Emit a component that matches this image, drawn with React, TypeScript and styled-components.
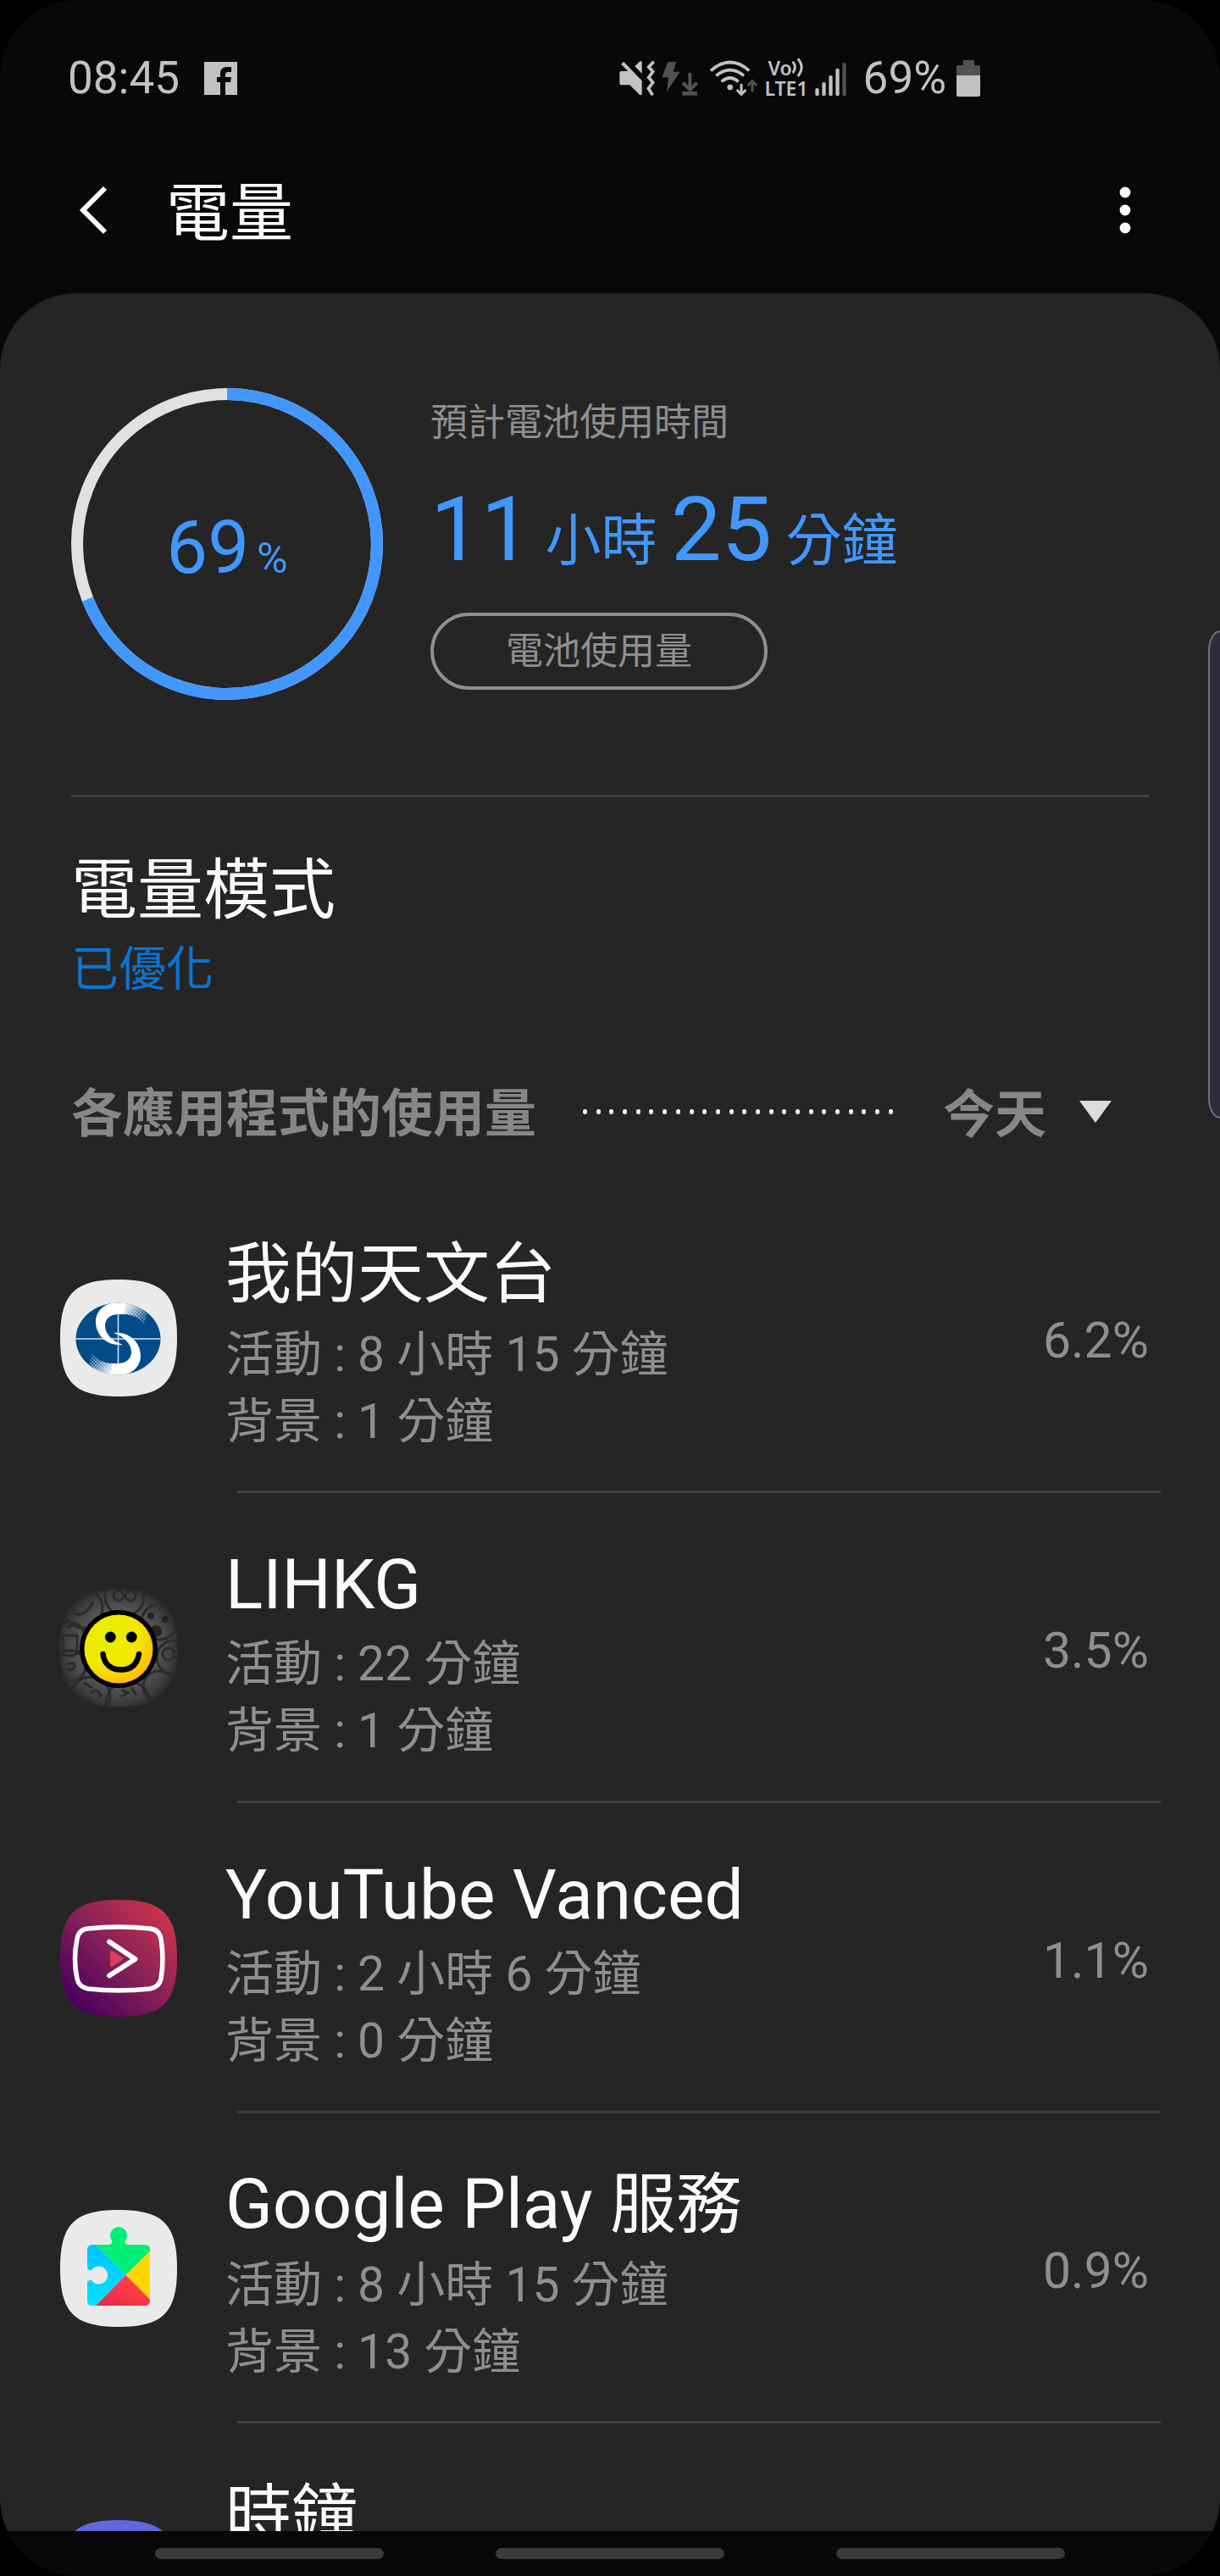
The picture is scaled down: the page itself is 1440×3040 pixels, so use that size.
import React from "react";
import styled, { createGlobalStyle } from "styled-components";

const color = {
  frame: "#000000",
  screen: "#080808",
  card: "#252525",
  line: "#3f3f3f",
  text: "#fafafa",
  muted: "#8f8f8f",
  section: "#878787",
  accent: "#4297ff",
  link: "#0b74d0",
  status: "#c2c2c2",
  dim: "#525252",
};

const GlobalStyle = createGlobalStyle`
  *, *::before, *::after { box-sizing: border-box; }
  body {
    margin: 0;
    background: ${color.frame};
    color: ${color.text};
    font-family: Roboto, "Noto Sans CJK TC", sans-serif;
    font-weight: 400;
  }
  h1, h2, p, ul { margin: 0; padding: 0; font-weight: 400; }
  button, select { font: inherit; color: inherit; background: none; border: 0; padding: 0; }
  svg { display: block; flex: none; }
`;

const Screen = styled.div`
  position: relative;
  display: flex;
  flex-direction: column;
  height: 100vh;
  overflow: hidden;
  border-radius: 92px;
  background: ${color.screen};
`;

/* ---------- status bar ---------- */

const StatusBar = styled.div`
  display: flex;
  flex: none;
  align-items: center;
  justify-content: space-between;
  padding: 60px 283px 26px 80px;
  color: ${color.status};
  font-size: 53px;
  line-height: 64px;
`;

const StatusGroup = styled.div<{ $gap: number }>`
  display: flex;
  align-items: center;
  gap: ${(p) => p.$gap}px;
`;

const Volte = styled.div`
  display: flex;
  flex-direction: column;
  font-family: "Noto Sans", Roboto, sans-serif;
  font-size: 23px;
  font-weight: 600;
  line-height: 24px;
`;

const VolteTop = styled.span`
  display: flex;
  align-items: center;
  padding-left: 4px;
`;

/* ---------- toolbar ---------- */

const Toolbar = styled.header`
  display: flex;
  flex: none;
  align-items: center;
  height: 196px;
  padding: 0 84px 0 82px;
`;

const IconButton = styled.button`
  display: flex;
  align-items: center;
  justify-content: center;
  width: 56px;
  height: 96px;
  cursor: pointer;
`;

const PageTitle = styled.h1`
  flex: 1;
  padding: 8px 0 0 58px;
  font-size: 75px;
  line-height: 96px;
`;

/* ---------- card ---------- */

const Card = styled.main`
  flex: 1;
  min-height: 0;
  overflow: hidden;
  border-radius: 90px 90px 0 0;
  background: ${color.card};
`;

const Hero = styled.section`
  display: flex;
  align-items: center;
  gap: 56px;
  margin: 0 84px;
  padding: 112px 0;
  border-bottom: 3px solid ${color.line};
`;

const Gauge = styled.div`
  position: relative;
  flex: none;
  width: 368px;
  height: 368px;
`;

const GaugeLabel = styled.div`
  position: absolute;
  inset: 0;
  display: flex;
  align-items: baseline;
  justify-content: center;
  gap: 9px;
  color: ${color.accent};
  font-size: 87px;
  line-height: 376px;
`;

const GaugeUnit = styled.span`
  font-size: 50px;
  line-height: 1;
`;

const Estimate = styled.div`
  display: flex;
  flex-direction: column;
  align-items: flex-start;
  gap: 36px;
`;

const EstimateLabel = styled.p`
  color: ${color.muted};
  font-size: 44px;
  line-height: 56px;
`;

const EstimateTime = styled.p`
  color: ${color.accent};
  font-size: 106px;
  line-height: 124px;
  white-space: nowrap;
`;

const TimeUnit = styled.span`
  font-size: 66px;
  line-height: 1;
`;

const UsageButton = styled.button`
  height: 91px;
  padding: 2px 85px 0;
  border: 4px solid ${color.muted};
  border-radius: 46px;
  color: ${color.muted};
  font-size: 44px;
  line-height: 56px;
  cursor: pointer;
`;

const ModeButton = styled.button`
  display: block;
  width: 100%;
  padding: 61px 84px 0;
  text-align: left;
  cursor: pointer;
`;

const ModeTitle = styled.span`
  display: block;
  font-size: 78px;
  line-height: 100px;
`;

const ModeValue = styled.span`
  display: block;
  color: ${color.link};
  font-size: 56px;
  line-height: 84px;
`;

const SectionBar = styled.div`
  display: flex;
  align-items: center;
  padding: 70px 128px 28px 84px;
  color: ${color.section};
  font-size: 61px;
  line-height: 112px;
`;

const SectionTitle = styled.h2`
  padding-top: 6px;
  font-size: 61px;
  font-weight: 700;
  line-height: 106px;
`;

const Dots = styled.div`
  display: flex;
  flex: 1;
  justify-content: space-between;
  margin: 0 59px 0 55px;
`;

const Dot = styled.i`
  width: 5px;
  height: 6px;
  border-radius: 50%;
  background: ${color.text};
`;

const Period = styled.label`
  display: flex;
  align-items: center;
  gap: 38px;
`;

const PeriodSelect = styled.select`
  appearance: none;
  height: 112px;
  padding-top: 4px;
  font-size: 61px;
  font-weight: 700;
  cursor: pointer;
`;

/* ---------- app list ---------- */

const AppList = styled.ul`
  list-style: none;
`;

const AppRow = styled.li`
  display: grid;
  grid-template-columns: 138px 1fr auto;
  column-gap: 57px;
  align-items: center;
  height: 363px;
  padding: 2px 84px 0 71px;
`;

const RowLine = styled.li`
  height: 3px;
  margin: 0 70px 0 280px;
  background: ${color.line};
`;

const AppText = styled.div`
  min-height: 278px;
  padding: 10px 0 2px;
`;

const AppName = styled.h2`
  font-size: 82px;
  line-height: 108px;
`;

const Han = styled.span`
  font-size: 78px;
`;

const AppDetail = styled.p`
  color: ${color.muted};
  font-size: 57px;
  line-height: 79px;
`;

const AppShare = styled.span`
  padding-top: 6px;
  color: ${color.muted};
  font-size: 59px;
  line-height: 79px;
`;

/* ---------- system overlays ---------- */

const EdgeHandle = styled.div`
  position: absolute;
  top: 744px;
  right: 0;
  width: 14px;
  height: 576px;
  border: 2px solid #716f7b;
  border-right: 0;
  border-radius: 14px 0 0 14px / 24px 0 0 24px;
  background: #2e2b3a;
`;

const NavBar = styled.nav`
  display: flex;
  flex: none;
  align-items: center;
  justify-content: center;
  gap: 132px;
  height: 53px;
`;

const NavButton = styled.button`
  width: 270px;
  height: 13px;
  border-radius: 7px;
  background: #3a3a3a;
`;

/* ---------- drawings ---------- */

const SQUIRCLE =
  "M69 0C121 0 138 17 138 69C138 121 121 138 69 138C17 138 0 121 0 69C0 17 17 0 69 0Z";

const FacebookIcon = () => (
  <svg width="39" height="39" viewBox="0 0 39 39" aria-hidden="true">
    <path d="M0 0H39V39H0Z" fill={color.status} />
    <path
      d="M19 39V24H15V18H19V14Q19 6 27 6H32V12H28Q25 12 25 15V18H32L31 24H25V39Z"
      fill={color.screen}
    />
  </svg>
);

const MuteIcon = () => (
  <svg width="42" height="43" viewBox="91 84 126 129" aria-hidden="true">
    <path
      d="M107 90L171 157V200Q171 208 164 208L128 172H98Q92 172 92 166V129Q92 123 98 123H122L97 98Z"
      fill={color.status}
    />
    <path d="M146 106L164 88Q171 85 171 92V131Z" fill={color.status} />
    <path
      d="M213 89L195 108L210 125L195 145L210 163L194 184L209 208"
      fill="none"
      stroke={color.status}
      strokeWidth="11"
    />
  </svg>
);

const ChargeDownloadIcon = () => (
  <svg width="43" height="43" viewBox="240 84 129 129" aria-hidden="true">
    <path d="M262 90H291L281 125H305L258 195L264 145H241Z" fill={color.dim} />
    <path
      d="M340 129V186M315 164L340 189L365 164"
      fill="none"
      stroke={color.dim}
      strokeWidth="12"
    />
    <path d="M313 195H366V209H313Z" fill={color.dim} />
  </svg>
);

const WifiIcon = () => (
  <svg width="56" height="43" viewBox="416 84 168 129" aria-hidden="true">
    <g fill="none" stroke={color.status} strokeWidth="11">
      <path d="M419 121Q487 62 555 121" />
      <path d="M438 139Q487 99 536 139" />
      <path d="M457 160Q487 134 517 160" />
    </g>
    <circle cx="487" cy="180" r="10" fill={color.status} />
    <path
      d="M527 168V203M511 189L527 205L543 189"
      fill="none"
      stroke={color.status}
      strokeWidth="9"
    />
    <path
      d="M566 196V160M550 174L566 158L581 174"
      fill="none"
      stroke={color.dim}
      strokeWidth="9"
    />
  </svg>
);

const WavesIcon = () => (
  <svg width="13" height="24" viewBox="706 84 39 72" aria-hidden="true">
    <path
      d="M708 98Q724 118 708 138M726 88Q752 118 726 150"
      fill="none"
      stroke={color.status}
      strokeWidth="9"
    />
  </svg>
);

const SignalIcon = () => (
  <svg width="37" height="43" viewBox="791 84 111 129" aria-hidden="true">
    {[183, 162, 138, 113, 93].map((top, i) => (
      <rect
        key={top}
        x={792 + i * 24}
        y={top}
        width="13"
        height={211 - top}
        rx="6"
        fill={i === 4 ? color.dim : color.status}
      />
    ))}
  </svg>
);

const BatteryIcon = () => (
  <svg width="28" height="43" viewBox="0 0 84 129" aria-hidden="true">
    <path d="M23 4Q23 0 27 0H59Q63 0 63 4V18H78Q84 18 84 24V54H0V24Q0 18 6 18H23Z" fill={color.dim} />
    <path d="M0 54H84V123Q84 129 78 129H6Q0 129 0 123Z" fill={color.status} />
  </svg>
);

const BackIcon = () => (
  <svg width="36" height="58" viewBox="0 0 36 58" aria-hidden="true">
    <path d="M32 3L6 29L32 55" fill="none" stroke={color.text} strokeWidth="6" />
  </svg>
);

const MoreIcon = () => (
  <svg width="14" height="58" viewBox="0 0 14 58" aria-hidden="true">
    <g fill={color.text}>
      <circle cx="7" cy="8" r="6.4" />
      <circle cx="7" cy="29" r="6.4" />
      <circle cx="7" cy="50" r="6.4" />
    </g>
  </svg>
);

const CaretIcon = () => (
  <svg width="38" height="26" viewBox="0 0 38 26" aria-hidden="true">
    <path d="M0 0H38L19 26Z" fill="#dcdcdc" />
  </svg>
);

const GaugeRing = ({ percent }: { percent: number }) => (
  <svg width="368" height="368" viewBox="0 0 368 368" aria-hidden="true">
    <g fill="none" strokeWidth="14" transform="rotate(-90 184 184)">
      <circle cx="184" cy="184" r="177" stroke="#e1e1e1" />
      <circle
        cx="184"
        cy="184"
        r="177"
        stroke={color.accent}
        pathLength={100}
        strokeDasharray={`${percent} 100`}
      />
    </g>
  </svg>
);

const AppIconFrame = ({ children }: { children: React.ReactNode }) => (
  <svg width="138" height="138" viewBox="0 0 138 138" aria-hidden="true">
    {children}
  </svg>
);

const Swoosh = () => (
  <>
    <path
      d="M76 26C57 25 43 34 42 48C41 64 54 79 74 77C62 73 53 64 53 55C53 47 58 41 70 41L76 41Z"
      fill="#ffffff"
    />
    <path d="M75 26L90 26L103 40L99 52C94 46 86 41 75 41Z" fill="url(#swooshFade)" />
    <path d="M75 26L90 26L103 40L99 52C94 46 86 41 75 41Z" fill="url(#halftone)" opacity="0.6" />
  </>
);

const ObservatoryIcon = () => (
  <AppIconFrame>
    <defs>
      <pattern id="halftone" width="4" height="4" patternUnits="userSpaceOnUse">
        <circle cx="1" cy="1" r="0.9" fill="#ffffff" />
        <circle cx="3" cy="3" r="0.9" fill="#ffffff" />
      </pattern>
      <linearGradient id="swooshFade" gradientUnits="userSpaceOnUse" x1="75" y1="30" x2="98" y2="46">
        <stop offset="0" stopColor="#ffffff" />
        <stop offset="1" stopColor="#ffffff" stopOpacity="0" />
      </linearGradient>
      <clipPath id="globe">
        <ellipse cx="68.5" cy="70" rx="50" ry="42.5" />
      </clipPath>
    </defs>
    <path d={SQUIRCLE} fill="#eaeaea" />
    <g clipPath="url(#globe)">
      <path d="M0 0H138V138H0Z" fill="#004b88" />
      <path d="M68.5 40V100M18 70H119" stroke="#cfe0ee" strokeWidth="1.6" />
      <Swoosh />
      <g transform="rotate(180 68.5 70)">
        <Swoosh />
      </g>
    </g>
  </AppIconFrame>
);

const LihkgIcon = () => (
  <AppIconFrame>
    <defs>
      <radialGradient id="lihkgBack" cx="50%" cy="50%" r="58%">
        <stop offset="0.55" stopColor="#565656" />
        <stop offset="0.8" stopColor="#3e3e3e" />
        <stop offset="1" stopColor="#1d1d1d" />
      </radialGradient>
      <radialGradient id="lihkgFace" cx="35%" cy="30%" r="80%">
        <stop offset="0" stopColor="#e6f000" />
        <stop offset="0.55" stopColor="#f2e800" />
        <stop offset="1" stopColor="#ffb400" />
      </radialGradient>
      <clipPath id="lihkgClip">
        <path d={SQUIRCLE} />
      </clipPath>
    </defs>
    <g clipPath="url(#lihkgClip)">
      <path d="M0 0H138V138H0Z" fill="url(#lihkgBack)" />
      <g fill="none" stroke="#2b2b2b" strokeWidth="3">
        <circle cx="27" cy="22" r="23" />
        <path d="M14 26Q28 36 39 14" />
        <circle cx="76" cy="8" r="23" />
        <circle cx="69" cy="7" r="6" />
        <circle cx="83" cy="7" r="6" />
        <circle cx="117" cy="38" r="21" />
        <circle cx="10" cy="58" r="20" />
        <path d="M3 54H20V72H4ZM9 45Q16 38 22 46" />
        <circle cx="12" cy="90" r="18" />
        <path d="M9 88Q18 84 17 91Q14 96 9 94" />
        <circle cx="134" cy="80" r="20" />
        <circle cx="128" cy="76" r="7" />
        <circle cx="36" cy="126" r="23" />
        <path d="M28 110L38 116M36 122Q46 114 48 128" />
        <circle cx="80" cy="134" r="26" />
        <path d="M72 118L80 122L72 126M84 116L90 124" />
        <circle cx="116" cy="114" r="18" />
      </g>
      <g fill="#242424">
        <circle cx="107" cy="31" r="4" />
        <circle cx="124" cy="35" r="4" />
        <circle cx="113" cy="49" r="7" />
      </g>
    </g>
    <circle cx="69" cy="70" r="46" fill="#000000" />
    <circle cx="69" cy="70" r="40.5" fill="url(#lihkgFace)" />
    <circle cx="59.3" cy="56" r="6.4" fill="#000000" />
    <circle cx="84.3" cy="56" r="6.4" fill="#000000" />
    <path
      d="M50.5 76C52 88 60 94.500 72 94.5C84 94.5 91 88 93 76"
      fill="none"
      stroke="#000000"
      strokeWidth="6.5"
      strokeLinecap="round"
    />
  </AppIconFrame>
);

const VancedIcon = () => (
  <AppIconFrame>
    <defs>
      <linearGradient id="vancedBack" x1="0.12" y1="0.88" x2="0.88" y2="0.12">
        <stop offset="0" stopColor="#4a005e" />
        <stop offset="0.5" stopColor="#852058" />
        <stop offset="1" stopColor="#c8324a" />
      </linearGradient>
    </defs>
    <path d={SQUIRCLE} fill="url(#vancedBack)" />
    <path
      d="M33 34Q69 30 106 34Q117 35 119 46Q123 70 119 93Q117 103 106 105Q69 109 33 105Q22 103 20 93Q15 70 20 46Q22 35 33 34Z"
      fill="none"
      stroke="#ffffff"
      strokeWidth="5.5"
    />
    <path
      d="M60.5 61.5L73 69.5L60.5 77.5Z"
      fill="#d93f5e"
      stroke="#d93f5e"
      strokeWidth="3"
      strokeLinejoin="round"
    />
    <path
      d="M58 49.5L88.5 70L58 89.5"
      fill="none"
      stroke="#ffffff"
      strokeWidth="5.8"
      strokeLinecap="round"
      strokeLinejoin="round"
    />
  </AppIconFrame>
);

const PlayServicesIcon = () => (
  <AppIconFrame>
    <defs>
      <linearGradient id="playBlue" x1="0" y1="0" x2="0" y2="1">
        <stop offset="0" stopColor="#00c3ff" />
        <stop offset="1" stopColor="#00e2ff" />
      </linearGradient>
      <linearGradient id="playRed" x1="0" y1="1" x2="1" y2="0">
        <stop offset="0" stopColor="#dc2a50" />
        <stop offset="0.6" stopColor="#ff3a44" />
      </linearGradient>
      <clipPath id="puzzle">
        <path d="M38 41H58Q62 40 61 36A10 10 0 1 1 77 36Q75 40 79 41H100Q106 41 106 47V107Q106 113 100 113H38Q32 113 32 107V86Q33 82 37 83A10.5 10.5 0 1 0 37 71Q33 72 32 68V47Q32 41 38 41Z" />
      </clipPath>
    </defs>
    <path d={SQUIRCLE} fill="#eaeaea" />
    <g clipPath="url(#puzzle)">
      <path d="M30 41H42L77.5 77L42 113H30Z" fill="url(#playBlue)" />
      <path d="M42 41V16H108V46.5L77.5 77Z" fill="#00f076" />
      <path d="M108 46.5V107.5L77.5 77Z" fill="#ffd500" />
      <path d="M42 113L77.5 77L108 107.5V115H42Z" fill="url(#playRed)" />
    </g>
  </AppIconFrame>
);

const ClockIcon = () => (
  <AppIconFrame>
    <path d={SQUIRCLE} fill="#6367da" />
  </AppIconFrame>
);

/* ---------- data ---------- */

interface AppUsage {
  latin?: string;
  han?: string;
  active: string;
  background: string;
  share: string;
  Icon: () => React.ReactElement;
}

const apps: AppUsage[] = [
  { han: "我的天文台", active: "8 小時 15 分鐘", background: "1 分鐘", share: "6.2%", Icon: ObservatoryIcon },
  { latin: "LIHKG", active: "22 分鐘", background: "1 分鐘", share: "3.5%", Icon: LihkgIcon },
  { latin: "YouTube Vanced", active: "2 小時 6 分鐘", background: "0 分鐘", share: "1.1%", Icon: VancedIcon },
  { latin: "Google Play ", han: "服務", active: "8 小時 15 分鐘", background: "13 分鐘", share: "0.9%", Icon: PlayServicesIcon },
];

export default function App() {
  return (
    <>
      <GlobalStyle />
      <Screen>
        <StatusBar>
          <StatusGroup $gap={29}>
            <span>08:45</span>
            <FacebookIcon />
          </StatusGroup>
          <StatusGroup $gap={20}>
            <StatusGroup $gap={8}>
              <StatusGroup $gap={14}>
                <StatusGroup $gap={8}>
                  <MuteIcon />
                  <ChargeDownloadIcon />
                </StatusGroup>
                <StatusGroup $gap={8}>
                  <WifiIcon />
                  <Volte>
                    <VolteTop>
                      Vo
                      <WavesIcon />
                    </VolteTop>
                    <span>LTE1</span>
                  </Volte>
                </StatusGroup>
              </StatusGroup>
              <SignalIcon />
            </StatusGroup>
            <StatusGroup $gap={12}>
              <span>69%</span>
              <BatteryIcon />
            </StatusGroup>
          </StatusGroup>
        </StatusBar>

        <Toolbar>
          <IconButton type="button" aria-label="返回">
            <BackIcon />
          </IconButton>
          <PageTitle>電量</PageTitle>
          <IconButton type="button" aria-label="更多選項">
            <MoreIcon />
          </IconButton>
        </Toolbar>

        <Card>
          <Hero>
            <Gauge>
              <GaugeRing percent={69} />
              <GaugeLabel>
                <span>69</span>
                <GaugeUnit>%</GaugeUnit>
              </GaugeLabel>
            </Gauge>
            <Estimate>
              <EstimateLabel>預計電池使用時間</EstimateLabel>
              <EstimateTime>
                11<TimeUnit> 小時 </TimeUnit>25<TimeUnit> 分鐘</TimeUnit>
              </EstimateTime>
              <UsageButton type="button">電池使用量</UsageButton>
            </Estimate>
          </Hero>

          <ModeButton type="button">
            <ModeTitle>電量模式</ModeTitle>
            <ModeValue>已優化</ModeValue>
          </ModeButton>

          <SectionBar>
            <SectionTitle>各應用程式的使用量</SectionTitle>
            <Dots aria-hidden="true">
              {Array.from({ length: 24 }, (_, i) => (
                <Dot key={i} />
              ))}
            </Dots>
            <Period>
              <PeriodSelect aria-label="時段" defaultValue="today">
                <option value="today">今天</option>
              </PeriodSelect>
              <CaretIcon />
            </Period>
          </SectionBar>

          <AppList>
            {apps.map(({ latin, han, active, background, share, Icon }) => (
              <React.Fragment key={share}>
                <AppRow>
                  <Icon />
                  <AppText>
                    <AppName>
                      {latin}
                      {han && <Han>{han}</Han>}
                    </AppName>
                    <AppDetail>活動 : {active}</AppDetail>
                    <AppDetail>背景 : {background}</AppDetail>
                  </AppText>
                  <AppShare>{share}</AppShare>
                </AppRow>
                <RowLine role="presentation" />
              </React.Fragment>
            ))}
            <AppRow>
              <ClockIcon />
              <AppText>
                <AppName>
                  <Han>時鐘</Han>
                </AppName>
              </AppText>
            </AppRow>
          </AppList>
        </Card>

        <NavBar>
          <NavButton type="button" aria-label="最近使用" />
          <NavButton type="button" aria-label="首頁" />
          <NavButton type="button" aria-label="返回" />
        </NavBar>
        <EdgeHandle />
      </Screen>
    </>
  );
}
